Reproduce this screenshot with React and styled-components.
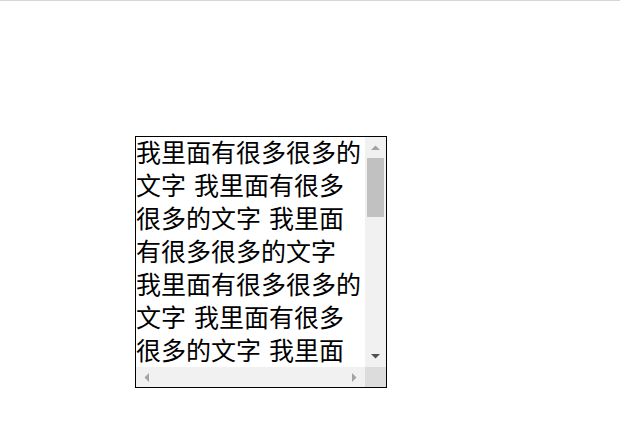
import React from "react";
import styled, { createGlobalStyle } from "styled-components";

const Global = createGlobalStyle`
  html, body { margin: 0; padding: 0; background: #fff; }
  body { font-family: "Noto Sans CJK SC", sans-serif; }
`;

const Page = styled.div`
  border-top: 1px solid #d6d6d6;
  padding: 135px 0 0 135px;
`;

const Frame = styled.div`
  width: 250px;
  height: 250px;
  border: 1px solid #000;
  display: grid;
  grid-template-columns: 229px 21px;
  grid-template-rows: 230px 20px;
`;

const Viewport = styled.div`
  overflow: hidden;
  font-family: "DejaVu Sans", "Noto Sans CJK SC", sans-serif;
  font-size: 25px;
  line-height: 33px;
  color: #000;
  word-break: normal;
`;

const VBar = styled.div`
  background: #f1f1f1;
  display: flex;
  flex-direction: column;
`;

const HBar = styled.div`
  background: #f1f1f1;
  display: flex;
  flex-direction: row;
`;

const Corner = styled.div`
  background: #dcdcdc;
`;

const Button = styled.div`
  flex: 0 0 ${(p) => p.$size}px;
  display: flex;
  align-items: center;
  justify-content: center;
`;

const Track = styled.div`
  flex: 1 1 auto;
  display: flex;
  flex-direction: ${(p) => (p.$vertical ? "column" : "row")};
`;

const Thumb = styled.div`
  flex: 0 0 59px;
  margin: 0 2px 0 2px;
  background: #c1c1c1;
`;

const Arrow = ({ dir, color }) => {
  const pts = {
    up: "0,5 9,5 4.5,0.5",
    down: "0,0 9,0 4.5,4.5",
    left: "5,0 5,9 0.5,4.5",
    right: "0,0 0,9 4.5,4.5",
  }[dir];
  const vertical = dir === "up" || dir === "down";
  return (
    <svg width={vertical ? 9 : 5} height={vertical ? 5 : 9} viewBox={vertical ? "0 0 9 5" : "0 0 5 9"}>
      <polygon points={pts} fill={color} />
    </svg>
  );
};

const unit = "我里面有很多很多的文字";

export default function App() {
  const text = Array.from({ length: 16 }, () => unit).join(" ");
  return (
    <>
      <Global />
      <Page>
        <Frame>
          <Viewport>{text}</Viewport>
          <VBar>
            <Button $size={21}>
              <Arrow dir="up" color="#a3a3a3" />
            </Button>
            <Track $vertical>
              <Thumb />
            </Track>
            <Button $size={21}>
              <Arrow dir="down" color="#505050" />
            </Button>
          </VBar>
          <HBar>
            <Button $size={21}>
              <Arrow dir="left" color="#a3a3a3" />
            </Button>
            <Track />
            <Button $size={21}>
              <Arrow dir="right" color="#a3a3a3" />
            </Button>
          </HBar>
          <Corner />
        </Frame>
      </Page>
    </>
  );
}
